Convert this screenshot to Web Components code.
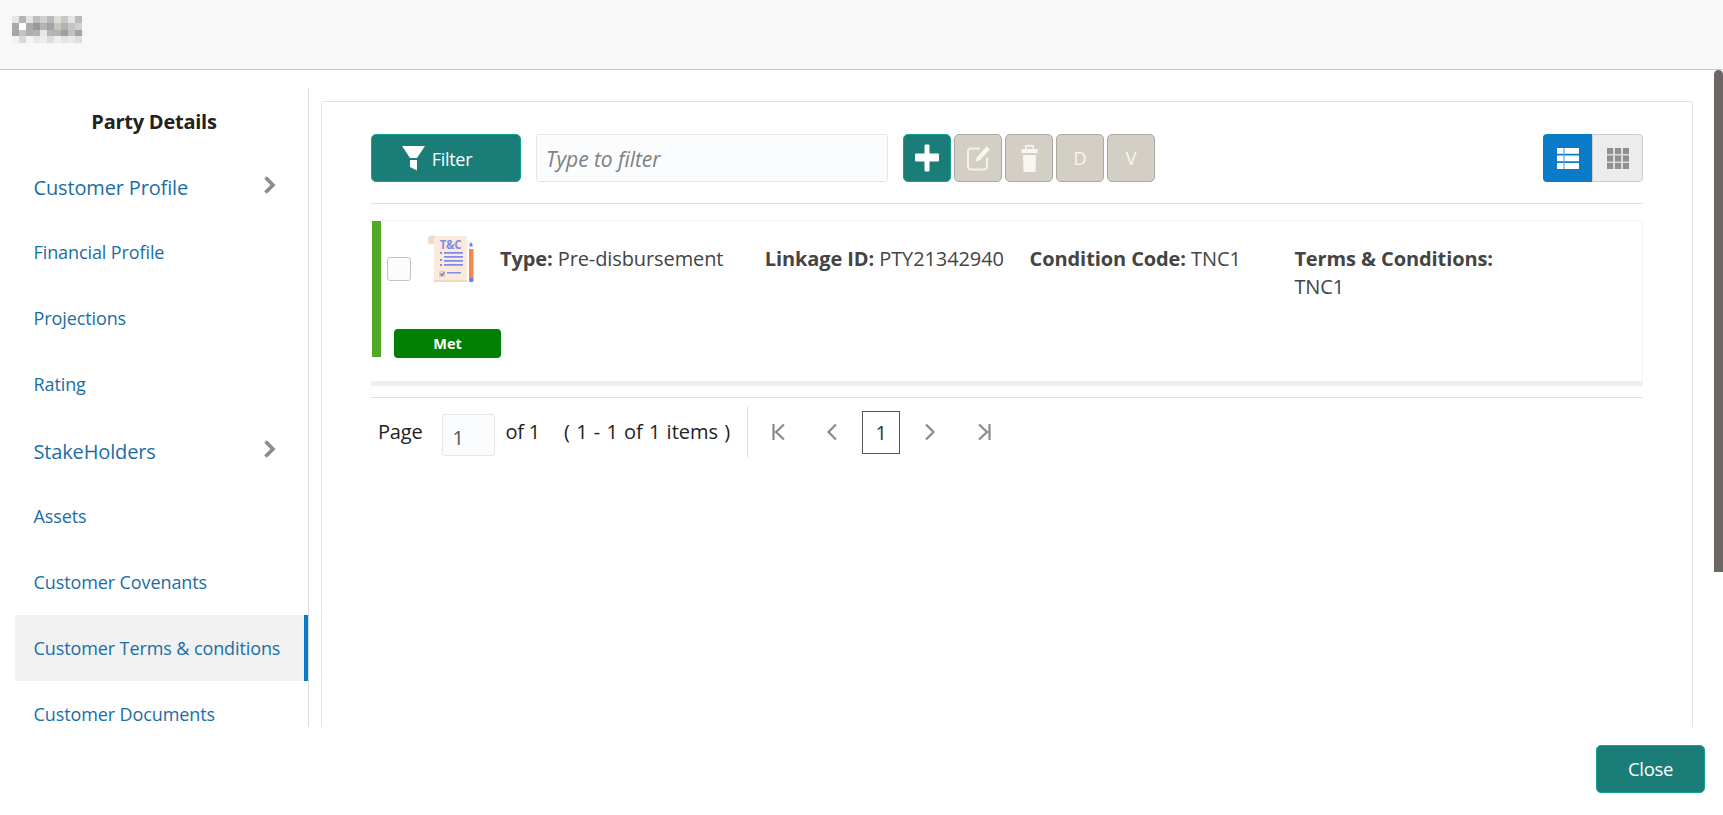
<!DOCTYPE html>
<html>
<head>
<meta charset="utf-8">
<title>Party Details</title>
<style>
  html, body { margin: 0; height: 100%; background: #fff; overflow: hidden; }
  body { font-family: "Open Sans", "Noto Sans", sans-serif; }
</style>
</head>
<body>
<app-shell>
  <party-sidebar slot="side" heading="Party Details">
    <nav-item big arrow>Customer Profile</nav-item>
    <nav-item>Financial Profile</nav-item>
    <nav-item>Projections</nav-item>
    <nav-item>Rating</nav-item>
    <nav-item big arrow>StakeHolders</nav-item>
    <nav-item>Assets</nav-item>
    <nav-item>Customer Covenants</nav-item>
    <nav-item selected>Customer Terms &amp; conditions</nav-item>
    <nav-item>Customer Documents</nav-item>
  </party-sidebar>
  <terms-panel slot="main">
    <tool-bar></tool-bar>
    <terms-card></terms-card>
    <pager-bar></pager-bar>
  </terms-panel>
</app-shell>

<script>
const LOGO = [
  ['#e8e6e0','#b4b4b4','#e4e4e4','#bdbdbd','#d0d0d0','#b8b8b8','#dcdcd8','#c8c8c8','#e4e4e4','#bbbbbb','#f8f8f8'],
  ['#a8a8a8','#ffffff','#aaaaaa','#999999','#b5b3ae','#9da3a8','#c9c4b8','#b3b3b3','#c5c5c0','#d0d0d0','#f8f8f8'],
  ['#a5a5a5','#c5c5c0','#adafb0','#b0b2b4','#e8e6e6','#b5b5b5','#aeb4bc','#9f9f9f','#bcc2cc','#a3a3a3','#e8f5fa'],
  ['#f2f2f2','#d8d8d8','#f5f5f5','#e8e8e8','#ececec','#dcdcdc','#eeeeee','#e4e4e4','#e8e8e8','#dedede','#f8f8f8']
];

class AppShell extends HTMLElement {
  constructor() {
    super();
    this.attachShadow({ mode: 'open' });
    this.shadowRoot.innerHTML = `
      <style>
        :host { display: flex; flex-direction: column; height: 815px; position: relative; }
        header { height: 69px; flex: none; background: #f8f8f8; border-bottom: 1px solid #c9c9c9; position: relative; }
        .logo { display: grid; grid-template-columns: repeat(10, 7px) 3px; grid-auto-rows: 6.75px; padding: 16px 0 0 12px; }
        .logo i { display: block; }
        main { height: 657px; flex: none; display: flex; overflow: hidden; }
        footer { flex: 1; display: flex; justify-content: flex-end; align-items: flex-start; padding: 18px 18px 0 0; }
        button {
          width: 109px; height: 48px; padding: 0 0 2px; border: 1px solid #12a193; border-radius: 5px;
          background: #1b7d78; color: #fff; font: 18.500px "Open Sans", sans-serif; letter-spacing: -.3px;
        }
        .scroll { position: absolute; top: 70px; right: 0; width: 9px; height: 502px; background: #6e6565; border-radius: 5px 5px 0 0; }
      </style>
      <header><div class="logo">${LOGO.flat().map(c => `<i style="background:${c}"></i>`).join('')}</div></header>
      <main><slot name="side"></slot><slot name="main"></slot></main>
      <footer><button>Close</button></footer>
      <div class="scroll"></div>`;
  }
}
customElements.define('app-shell', AppShell);

class PartySidebar extends HTMLElement {
  constructor() {
    super();
    this.attachShadow({ mode: 'open' });
    this.shadowRoot.innerHTML = `
      <style>
        :host { display: block; flex: none; box-sizing: border-box; width: 294px; margin: 18px 0 0 15px; border-right: 1px solid #d5dde5; }
        h2 { margin: 0; height: 65px; line-height: 67px; text-align: center; font-size: 20px; font-weight: 700; color: #222; letter-spacing: -.25px; padding-right: 15px; }
      </style>
      <h2></h2>
      <slot></slot>`;
  }
  connectedCallback() {
    this.shadowRoot.querySelector('h2').textContent = this.getAttribute('heading');
  }
}
customElements.define('party-sidebar', PartySidebar);

class NavItem extends HTMLElement {
  constructor() {
    super();
    this.attachShadow({ mode: 'open' });
    this.shadowRoot.innerHTML = `
      <style>
        :host { display: flex; align-items: center; justify-content: space-between; box-sizing: border-box; height: 66px; padding: 0 32px 0 18.500px; color: #1a6ea6; font-size: 18px; letter-spacing: -.1px; white-space: nowrap; }
        :host([big]) { font-size: 20px; letter-spacing: -.15px; padding-top: 2px; }
        :host([selected]) { background: #f1f1f1; border-right: 4px solid #0a7bc8; padding-right: 28px; }
        svg { display: none; width: 13px; height: 20px; margin-top: -4px; }
        :host([arrow]) svg { display: block; }
      </style>
      <slot></slot>
      <svg viewBox="0 0 13 20"><path d="M2.5 2.5 10 10l-7.500 7.500" fill="none" stroke="#8c8c8c" stroke-width="3.600"/></svg>`;
  }
}
customElements.define('nav-item', NavItem);

class TermsPanel extends HTMLElement {
  constructor() {
    super();
    this.attachShadow({ mode: 'open' });
    this.shadowRoot.innerHTML = `
      <style>
        :host { display: block; flex: none; box-sizing: border-box; width: 1372px; height: 700px; margin: 30.5px 0 0 12px; padding: 32.500px 49px 0; border: 1px solid #e2e2e2; border-bottom: 0; border-radius: 2px 2px 0 0; }
      </style>
      <slot></slot>`;
  }
}
customElements.define('terms-panel', TermsPanel);

class ToolBar extends HTMLElement {
  constructor() {
    super();
    this.attachShadow({ mode: 'open' });
    this.shadowRoot.innerHTML = `
      <style>
        :host { display: flex; align-items: flex-start; height: 69px; border-bottom: 1px solid #e0e0e0; box-sizing: content-box; font-size: 18px; }
        .btn { box-sizing: border-box; height: 48px; display: flex; align-items: center; justify-content: center; border-radius: 5px; flex: none; }
        .filter { width: 150px; background: #1b7d78; border: 1px solid #12a193; color: #fff; letter-spacing: -.3px; gap: 7px; padding-right: 18px; }
        .filter span { padding-top: 2px; }
        .field { box-sizing: border-box; width: 352px; height: 48px; margin: 0 15px; padding: 0 9px; line-height: 48px; border: 1px solid #e6e6e6; border-radius: 3px; background: #fbfcfd; color: #808080; font-style: italic; font-size: 21px; letter-spacing: -.05px; }
        .group { display: flex; gap: 3px; }
        .sq { width: 48px; background: #d4cfc4; border: 1px solid #a9a9a2; color: #f7f6f3; font-size: 18px; }
        .sq.on { background: #1b7d78; border-color: #12a193; }
        .toggle { display: flex; margin-left: auto; height: 48px; }
        .toggle div { height: 48px; display: flex; align-items: center; justify-content: center; box-sizing: border-box; }
        .list { width: 49px; background: #0a7bc8; border-radius: 4px 0 0 4px; }
        .grid { width: 51px; background: #ececec; border: 1px solid #ccc; border-radius: 0 4px 4px 0; }
      </style>
      <div class="btn filter">
        <svg width="23" height="25" viewBox="0 0 23 25" style="margin-top:1px"><path fill="#fff" d="M0 0h23l-8 12H8zM8 14h7v10.500L8 21z"/></svg>
        <span>Filter</span>
      </div>
      <div class="field">Type to filter</div>
      <div class="group">
        <div class="btn sq on"><svg width="24" height="28" viewBox="0 0 24 28"><path fill="#fff" d="M9.500 1.500q0-1 1-1h3q1 0 1 1V9.500H23q1 0 1 1v6q0 1-1 1H14.500v9q0 1-1 1h-3q-1 0-1-1v-9H1q-1 0-1-1v-6q0-1 1-1h8.500z"/></svg></div>
        <div class="btn sq"><svg width="25" height="29" viewBox="0 0 25 29"><path fill="none" stroke="#f3f1ec" stroke-width="2" d="M14 4.500H5q-3 0-3 3v15q0 3 3 3h13q3 0 3-3v-9"/><path fill="#f7f6f3" d="M9.500 18l1.200-4.500L20.500 2.500l3.500 3-10 10.500z"/></svg></div>
        <div class="btn sq"><svg width="17" height="27" viewBox="0 0 17 27"><path fill="#f7f6f3" d="M5 0h7q1 0 1 1v3h3.500v4H.5V4H4V1q0-1 1-1zM5.500 1.800V4h6V1.800zM2 10h13l-.5 17h-12z"/></svg></div>
        <div class="btn sq">D</div>
        <div class="btn sq">V</div>
      </div>
      <div class="toggle">
        <div class="list"><svg width="22" height="21" viewBox="0 0 22 21"><rect x="6.500" width="1" height="21" fill="#69b4e8"/><path fill="#fff" d="M0 0h6.500v5.800H0zM7.500 0H22v5.800H7.500zM0 7.500h6.500v5.800H0zM7.500 7.500H22v5.800H7.500zM0 15h6.500v6H0zM7.500 15H22v6H7.500z"/></svg></div>
        <div class="grid"><svg width="22" height="21" viewBox="0 0 22 21"><rect width="22" height="21" fill="#dcdcdc"/><path fill="#8f8f8f" d="M0 0h6v6H0zM8 0h6v6H8zM16 0h6v6h-6zM0 7.500h6v6H0zM8 7.500h6v6H8zM16 7.500h6v6h-6zM0 15h6v6H0zM8 15h6v6H8zM16 15h6v6h-6z"/></svg></div>
      </div>`;
  }
}
customElements.define('tool-bar', ToolBar);

class TermsCard extends HTMLElement {
  constructor() {
    super();
    this.attachShadow({ mode: 'open' });
    this.shadowRoot.innerHTML = `
      <style>
        :host { display: block; box-sizing: border-box; position: relative; height: 166px; margin-top: 16px; border: 1px solid #f2f4f7; border-left: 0; border-bottom: 5px solid #ebf0f8; color: #444; font-size: 20px; letter-spacing: -.1px; }
        .bar { position: absolute; left: 1px; top: 0; width: 9px; height: 136px; background: #50aa27; }
        .check { position: absolute; left: 16px; top: 36px; width: 24px; height: 24px; box-sizing: border-box; border: 1.500px solid #c4c4c4; border-radius: 3px; background: #fbfcfe; }
        svg { position: absolute; left: 57px; top: 14px; }
        .fields { display: grid; grid-template-columns: repeat(4, 264.800px); padding: 23.500px 0 0 129px; line-height: 28px; }
        b { font-weight: 700; }
        .badge { position: absolute; left: 23px; top: 108px; width: 107px; height: 29px; line-height: 30px; border-radius: 4px; background: #008000; color: #fff; text-align: center; font-size: 14.500px; font-weight: 700; letter-spacing: 0; }
      </style>
      <div class="bar"></div>
      <div class="check"></div>
      <svg width="46" height="47" viewBox="0 0 46 47">
        <path fill="#f0d9c6" d="M0 4q0-3.500 3-3.500h4V9H2Q0 9 0 7z"/>
        <rect x="6" y="1" width="33" height="46" fill="#fbeadb"/>
        <rect x="6" y="45" width="33" height="2" fill="#f3d9c2"/>
        <text x="22.500" y="13.500" text-anchor="middle" font-family="Open Sans, sans-serif" font-size="11.500" font-weight="700" fill="#7f8ee2" letter-spacing="-.3">T&amp;C</text>
        <path fill="#7f8ee2" d="M12 17h2v2h-2zM16 17h19v1.800H16zM16 21h19v1.800H16zM12 24h2v2h-2zM16 25h19v1.800H16zM12 29h2v2h-2zM16 29h19v1.800H16zM19 37h14v1.500H19z"/>
        <rect x="11" y="36" width="6" height="6" fill="#e6cdb9"/>
        <path d="M12.500 39l1.500 1.500 2.500-3" fill="none" stroke="#6a7bd6" stroke-width="1.200"/>
        <path fill="#6d84d8" d="M41.500 9.500 43 7l1.500 2.500v2h-3zM41 43h4.500v3q0 1-1.500 1h-1.500q-1.500 0-1.500-1z"/>
        <rect x="41" y="14" width="4.500" height="29" fill="#f6864b"/>
      </svg>
      <div class="fields">
        <div><b>Type:</b> Pre-disbursement</div>
        <div><b>Linkage ID:</b> PTY21342940</div>
        <div><b>Condition Code:</b> TNC1</div>
        <div><b>Terms &amp; Conditions:</b><br>TNC1</div>
      </div>
      <div class="badge">Met</div>`;
  }
}
customElements.define('terms-card', TermsCard);

class PagerBar extends HTMLElement {
  constructor() {
    super();
    this.attachShadow({ mode: 'open' });
    this.shadowRoot.innerHTML = `
      <style>
        :host { display: flex; align-items: center; box-sizing: border-box; height: 60px; margin-top: 11px; padding: 9px 0 0 7px; border-top: 1px solid #e0e0e0; color: #222; font-size: 20px; letter-spacing: -.2px; }
        span { margin-top: -2px; }
        .num { box-sizing: border-box; width: 53px; height: 42px; margin: 6px 10px 0 20px; line-height: 46px; padding-left: 9px; border: 1px solid #e6e6e6; border-radius: 3px; background: #fbfcfd; color: #555; font-size: 20px; }
        .count { margin-left: 24px; letter-spacing: 0; word-spacing: 1px; }
        .sep { width: 1px; height: 50px; background: #dcdcdc; margin: 0 24px 0 17px; }
        svg { flex: none; }
        .cur { box-sizing: border-box; width: 38px; height: 43px; line-height: 41px; text-align: center; border: 1px solid #555; font-size: 20px; color: #333; margin: 0 25px 0 25px; }
      </style>
      <span>Page</span>
      <div class="num">1</div>
      <span>of 1</span>
      <span class="count">( 1 - 1 of 1 items )</span>
      <div class="sep"></div>
      <svg width="13" height="18" viewBox="0 0 13 18"><path fill="none" stroke="#8a8a8a" stroke-width="2.200" d="M1.500 1v16M12 1.500 4 9l8 7.500"/></svg>
      <svg width="11" height="18" viewBox="0 0 11 18" style="margin-left:41px"><path fill="none" stroke="#8a8a8a" stroke-width="2.200" d="M10 1.500 2.500 9l7.500 7.500"/></svg>
      <div class="cur">1</div>
      <svg width="11" height="18" viewBox="0 0 11 18"><path fill="none" stroke="#8a8a8a" stroke-width="2.200" d="M1 1.500 8.500 9 1 16.500"/></svg>
      <svg width="13" height="18" viewBox="0 0 13 18" style="margin-left:42px"><path fill="none" stroke="#8a8a8a" stroke-width="2.200" d="M11.500 1v16M1 1.500 9 9l-8 7.500"/></svg>`;
  }
}
customElements.define('pager-bar', PagerBar);
</script>
</body>
</html>
